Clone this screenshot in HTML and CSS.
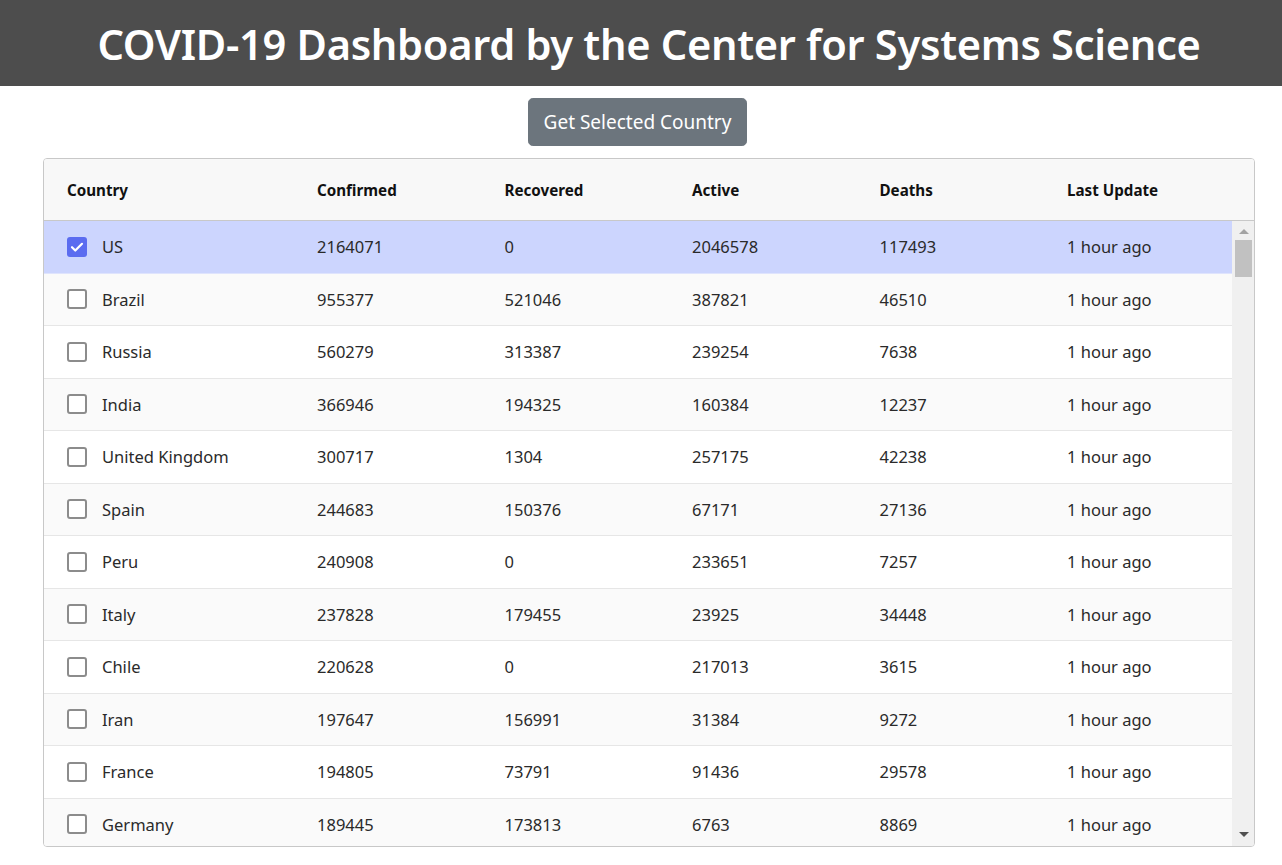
FILE: index.html
```html
<!DOCTYPE html>
<html lang="en">
<head>
<meta charset="utf-8">
<title>COVID-19 Dashboard</title>
<link rel="stylesheet" href="styles.css">
</head>
<body>
<header class="topbar">
  <h1 class="title">COVID-19 Dashboard by the Center for Systems Science</h1>
</header>
<div class="actions">
  <button class="btn">Get Selected Country</button>
</div>
<div class="wrap">
  <div class="grid">
    <div class="row head">
      <div class="cell">Country</div>
      <div class="cell">Confirmed</div>
      <div class="cell">Recovered</div>
      <div class="cell">Active</div>
      <div class="cell">Deaths</div>
      <div class="cell">Last Update</div>
    </div>
    <div class="body">
      <div class="rows">
        <div class="row sel"><div class="cell"><span class="cb on"><svg viewBox="0 0 20 20" width="20" height="20"><path d="M5 10.2l3.3 3.3L15 6.8" fill="none" stroke="#fff" stroke-width="2.2" stroke-linecap="round" stroke-linejoin="round"/></svg></span>US</div><div class="cell">2164071</div><div class="cell">0</div><div class="cell">2046578</div><div class="cell">117493</div><div class="cell">1 hour ago</div></div>
        <div class="row odd"><div class="cell"><span class="cb"></span>Brazil</div><div class="cell">955377</div><div class="cell">521046</div><div class="cell">387821</div><div class="cell">46510</div><div class="cell">1 hour ago</div></div>
        <div class="row"><div class="cell"><span class="cb"></span>Russia</div><div class="cell">560279</div><div class="cell">313387</div><div class="cell">239254</div><div class="cell">7638</div><div class="cell">1 hour ago</div></div>
        <div class="row odd"><div class="cell"><span class="cb"></span>India</div><div class="cell">366946</div><div class="cell">194325</div><div class="cell">160384</div><div class="cell">12237</div><div class="cell">1 hour ago</div></div>
        <div class="row"><div class="cell"><span class="cb"></span>United Kingdom</div><div class="cell">300717</div><div class="cell">1304</div><div class="cell">257175</div><div class="cell">42238</div><div class="cell">1 hour ago</div></div>
        <div class="row odd"><div class="cell"><span class="cb"></span>Spain</div><div class="cell">244683</div><div class="cell">150376</div><div class="cell">67171</div><div class="cell">27136</div><div class="cell">1 hour ago</div></div>
        <div class="row"><div class="cell"><span class="cb"></span>Peru</div><div class="cell">240908</div><div class="cell">0</div><div class="cell">233651</div><div class="cell">7257</div><div class="cell">1 hour ago</div></div>
        <div class="row odd"><div class="cell"><span class="cb"></span>Italy</div><div class="cell">237828</div><div class="cell">179455</div><div class="cell">23925</div><div class="cell">34448</div><div class="cell">1 hour ago</div></div>
        <div class="row"><div class="cell"><span class="cb"></span>Chile</div><div class="cell">220628</div><div class="cell">0</div><div class="cell">217013</div><div class="cell">3615</div><div class="cell">1 hour ago</div></div>
        <div class="row odd"><div class="cell"><span class="cb"></span>Iran</div><div class="cell">197647</div><div class="cell">156991</div><div class="cell">31384</div><div class="cell">9272</div><div class="cell">1 hour ago</div></div>
        <div class="row"><div class="cell"><span class="cb"></span>France</div><div class="cell">194805</div><div class="cell">73791</div><div class="cell">91436</div><div class="cell">29578</div><div class="cell">1 hour ago</div></div>
        <div class="row odd"><div class="cell"><span class="cb"></span>Germany</div><div class="cell">189445</div><div class="cell">173813</div><div class="cell">6763</div><div class="cell">8869</div><div class="cell">1 hour ago</div></div>
      </div>
      <div class="sbar">
        <span class="arrow up"></span>
        <span class="thumb"></span>
        <span class="fill"></span>
        <span class="arrow down"></span>
      </div>
    </div>
  </div>
</div>
</body>
</html>
```
FILE: styles.css
```css
* { box-sizing: border-box; }
html, body { margin: 0; padding: 0; background: #fff; }
body {
  font-family: "Noto Sans", "Open Sans", sans-serif;
  color: #212529;
  overflow: hidden;
  height: 865px;
}
.topbar {
  background: #4d4d4d;
  height: 86px;
  display: flex;
  align-items: center;
  justify-content: center;
  padding-left: 16px;
}
.title {
  margin: 0;
  color: #fff;
  font-size: 41.6px;
  font-weight: 600;
  letter-spacing: -0.3px;
  line-height: 1.2;
  padding-top: 3px;
}
.actions {
  display: flex;
  justify-content: center;
  padding-top: 12px;
}
.btn {
  font-family: inherit;
  background: #6c757d;
  color: #fff;
  border: 1px solid #6c757d;
  border-radius: 4.8px;
  height: 48px;
  width: 219px;
  font-size: 19px;
  white-space: nowrap;
  padding: 0;
  margin-right: 7px;
}
.wrap {
  padding: 12px 27px 0 43px;
}
.grid {
  border: 1px solid #c8c8c8;
  border-radius: 4px;
  overflow: hidden;
  background: #fff;
}
.row {
  display: grid;
  grid-template-columns: 250px repeat(4, 187.5px) 1fr;
  align-items: center;
}
.cell {
  padding-left: 23px;
  display: flex;
  align-items: center;
  white-space: nowrap;
}
.head {
  height: 62px;
  background: #f8f8f8;
  border-bottom: 1px solid #c8c8c8;
  font-size: 15.2px;
  font-weight: 700;
  color: #111;
  padding-top: 1px;
}
.body {
  display: flex;
  height: 625px;
  overflow: hidden;
}
.rows {
  flex: 1;
  min-width: 0;
}
.rows .row {
  height: 52.5px;
  border-bottom: 1px solid #e6e6e6;
  font-size: 16.5px;
  color: #2a2a2a;
}
.rows .row.odd { background: #fafafa; }
.rows .row.sel { background: #ccd5fe; border-bottom-color: #dfe4fd; }
.cb {
  width: 20px;
  height: 20px;
  border: 2px solid #8c8c8c;
  border-radius: 3px;
  margin-right: 15px;
  flex: none;
  display: inline-flex;
  background: #fff;
}
.cb.on {
  background: #5b6cf0;
  border: none;
  border-radius: 3px;
}
.sbar {
  width: 22px;
  flex: none;
  background: #f0f0f0;
  display: flex;
  flex-direction: column;
  align-items: center;
  padding: 0 2px 0 3px;
}
.arrow {
  width: 0;
  height: 0;
  border-left: 5px solid transparent;
  border-right: 5px solid transparent;
  margin: 8px 0 6px;
}
.arrow.up { border-bottom: 5px solid #a3a3a3; }
.arrow.down { border-top: 5px solid #505050; margin: 0 0 9px; }
.thumb {
  width: 17px;
  height: 37px;
  background: #c1c1c1;
}
.fill { flex: 1; }
```
